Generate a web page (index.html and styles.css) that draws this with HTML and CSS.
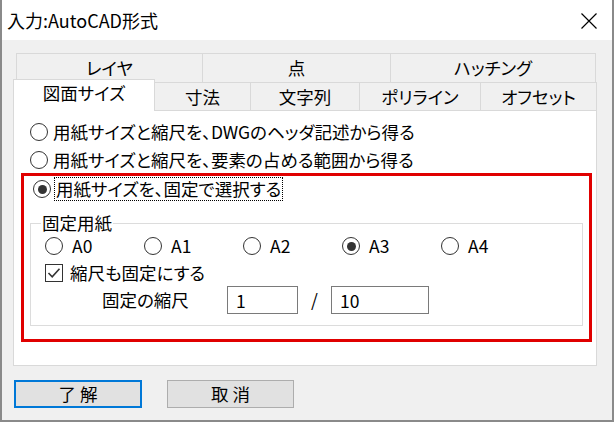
FILE: index.html
```html
<!DOCTYPE html>
<html lang="ja">
<head>
<meta charset="utf-8">
<title>入力:AutoCAD形式</title>
<link rel="stylesheet" href="styles.css">
</head>
<body>
<div class="window">
  <div class="titlebar">
    <span class="title">入力:AutoCAD形式</span>
    <svg class="close" width="18" height="18" viewBox="0 0 18 18"><path d="M1.5 1.5 L16.5 16.5 M16.5 1.5 L1.5 16.5" stroke="#000" stroke-width="1.2" fill="none"/></svg>
  </div>
  <div class="tabs">
    <div class="row row1">
      <div class="tab t-layer">レイヤ</div>
      <div class="tab t-point">点</div>
      <div class="tab t-hatch">ハッチング</div>
    </div>
    <div class="row row2">
      <div class="tab sel t-size">図面サイズ</div>
      <div class="tab t-dim">寸法</div>
      <div class="tab t-text">文字列</div>
      <div class="tab t-poly">ポリライン</div>
      <div class="tab t-off">オフセット</div>
    </div>
  </div>
  <div class="panel">
    <div class="opt opt1"><span class="radio"></span><span class="lbl">用紙サイズと縮尺を、DWGのヘッダ記述から得る</span></div>
    <div class="opt opt2"><span class="radio"></span><span class="lbl">用紙サイズと縮尺を、要素の占める範囲から得る</span></div>
    <div class="highlight">
      <div class="opt opt3"><span class="radio on"></span><span class="lbl focus">用紙サイズを、固定で選択する</span></div>
      <fieldset class="group">
        <legend>固定用紙</legend>
        <div class="fs-body">
          <div class="papers">
            <span class="paper"><span class="radio"></span><span>A0</span></span>
            <span class="paper"><span class="radio"></span><span>A1</span></span>
            <span class="paper"><span class="radio"></span><span>A2</span></span>
            <span class="paper"><span class="radio on"></span><span>A3</span></span>
            <span class="paper"><span class="radio"></span><span>A4</span></span>
          </div>
          <div class="check-row">
            <svg class="check" width="18" height="18" viewBox="0 0 18 18"><rect x="0.5" y="0.5" width="17" height="17" fill="#fff" stroke="#333"/><path d="M3.5 9 L7.2 12.8 L14.5 4.8" stroke="#333" stroke-width="1.6" fill="none"/></svg>
            <span>縮尺も固定にする</span>
          </div>
          <div class="scale-row">
            <span class="scale-lbl">固定の縮尺</span>
            <input class="field f1" value="1">
            <span class="slash">/</span>
            <input class="field f2" value="10">
          </div>
        </div>
      </fieldset>
    </div>
  </div>
  <div class="buttons">
    <div class="btn default">了 解</div>
    <div class="btn">取 消</div>
  </div>
</div>
</body>
</html>
```

FILE: styles.css
```css
html, body {
  margin: 0;
  padding: 0;
}
body {
  width: 614px;
  height: 422px;
  overflow: hidden;
  background: #f0f0f0;
  font-family: "Noto Sans CJK JP", "Noto Sans", sans-serif;
  font-size: 17.5px;
  font-feature-settings: "palt";
  color: #000;
}
.window {
  width: 614px;
  height: 422px;
  box-sizing: border-box;
  border: 2px solid #8a8a8a;
  border-top: none;
  background: #f0f0f0;
}
.titlebar {
  height: 40px;
  background: #fff;
  display: flex;
  align-items: center;
  justify-content: space-between;
  padding: 0 14px 0 5px;
}
.title {
  line-height: 22px;
  margin-top: -1px;
  font-size: 18px;
}
.close {
  display: block;
  margin-top: 2px;
}
.tabs {
  margin: 13px 0 0 11px;
  width: 584px;
}
.row {
  display: flex;
}
.row1 {
  height: 29px;
  margin-left: 3px;
  width: 580px;
}
.row2 {
  height: 28px;
  align-items: flex-end;
}
.tab {
  box-sizing: border-box;
  border: 1px solid #d9d9d9;
  border-bottom: none;
  background: #f0f0f0;
  display: flex;
  align-items: center;
  justify-content: center;
  line-height: 22px;
  margin-right: -1px;
  flex: none;
}
.row1 .tab { height: 29px; }
.row2 .tab { height: 28px; }
.row2 .tab.sel {
  height: 32px;
  margin-bottom: -1px;
  background: #fff;
  padding-bottom: 5px;
  position: relative;
  z-index: 1;
}
.t-layer { width: 187px; }
.t-point { width: 189px; }
.t-hatch { width: 206px; }
.t-size { width: 142px; }
.t-dim { width: 97px; }
.t-text { width: 110px; }
.t-poly { width: 122px; }
.t-off { width: 117px; }

.panel {
  margin-left: 11px;
  width: 584px;
  height: 256px;
  box-sizing: border-box;
  background: #fff;
  border: 1px solid #d9d9d9;
  padding-top: 9px;
}
.opt {
  display: flex;
  align-items: center;
  height: 24px;
  gap: 5px;
  line-height: 22px;
}
.opt1, .opt2 { padding-left: 16px; }
.opt2 { margin-top: 4px; }
.radio {
  width: 18px;
  height: 18px;
  box-sizing: border-box;
  border: 1px solid #333;
  border-radius: 50%;
  background: #fff;
  display: inline-flex;
  align-items: center;
  justify-content: center;
  flex: none;
}
.radio.on::after {
  content: "";
  width: 9px;
  height: 9px;
  border-radius: 50%;
  background: #333;
}
.highlight {
  margin: 1px 0 0 7px;
  width: 571px;
  box-sizing: border-box;
  border: 3px solid #e00000;
  padding: 1px 6px 13px 6px;
}
.opt3 {
  padding-left: 3px;
  gap: 3px;
}
.focus {
  border: 1px dotted #000;
  padding: 0 1px;
  line-height: 22px;
}
.group {
  margin: 13px 0 0 0;
  padding: 0;
  width: 553px;
  box-sizing: border-box;
  border: 1px solid #dcdcdc;
  min-width: 0;
}
.group legend {
  margin-left: 10px;
  padding: 0 1px;
  line-height: 18px;
}
.fs-body {
  padding: 0 0 11px 14px;
}
.papers {
  display: flex;
  height: 22px;
  margin-top: 3px;
  align-items: center;
  line-height: 22px;
}
.paper {
  width: 99px;
  display: inline-flex;
  align-items: center;
  gap: 9px;
  flex: none;
}
.check-row {
  margin-top: 5px;
  height: 22px;
  display: flex;
  align-items: center;
  gap: 7px;
  line-height: 22px;
}
.check { display: block; flex: none; }
.scale-row {
  margin-top: 2px;
  height: 28px;
  display: flex;
  align-items: center;
  line-height: 22px;
}
.scale-lbl {
  margin-left: 57px;
  width: 125px;
}
.field {
  box-sizing: border-box;
  height: 28px;
  border: 1px solid #7a7a7a;
  background: #fff;
  font: inherit;
  padding: 0 0 0 8px;
  margin: 0;
  outline: none;
  color: #000;
}
.f1 { width: 71px; }
.f2 { width: 98px; }
.slash {
  width: 33px;
  text-align: center;
}
.buttons {
  display: flex;
  margin: 14px 0 0 12px;
  gap: 25px;
}
.btn {
  box-sizing: border-box;
  width: 127px;
  height: 28px;
  background: #e1e1e1;
  border: 1px solid #adadad;
  display: flex;
  align-items: center;
  justify-content: center;
  line-height: 22px;
}
.btn.default {
  width: 128px;
  border: 2px solid #0078d7;
}
```
